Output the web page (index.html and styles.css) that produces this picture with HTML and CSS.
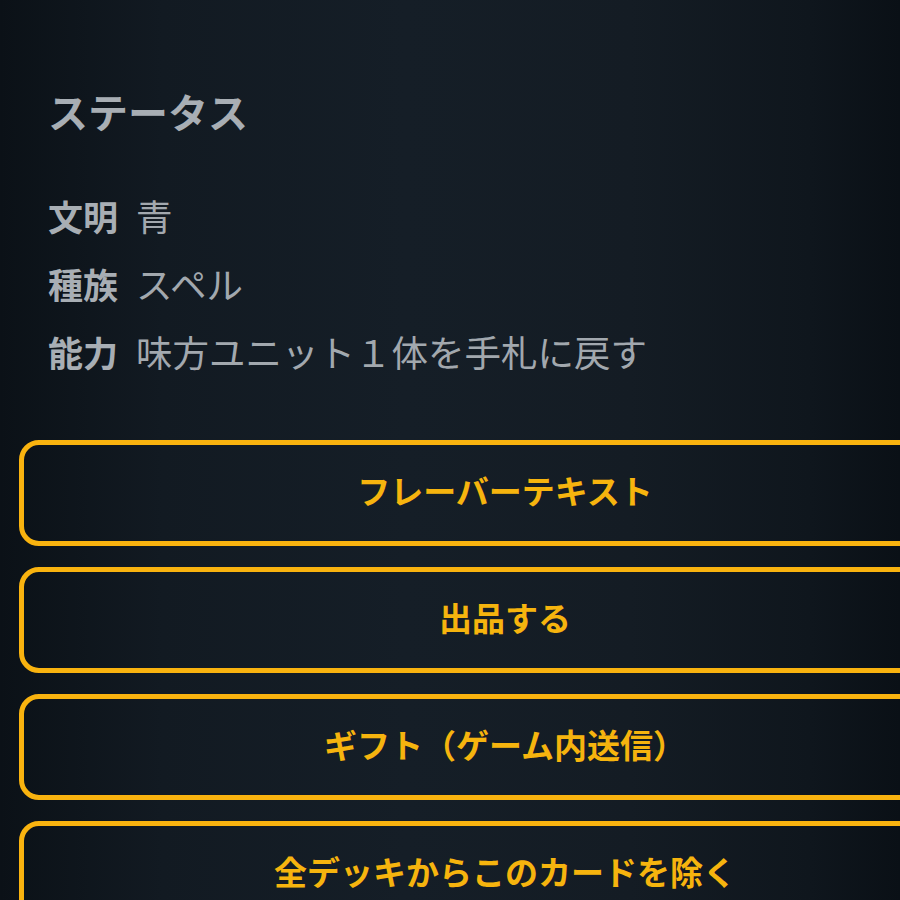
FILE: index.html
```html
<!DOCTYPE html>
<html lang="ja">
<head>
<meta charset="utf-8">
<title>ステータス</title>
<link rel="stylesheet" href="styles.css">
</head>
<body>
<main class="page">
  <h2 class="title">ステータス</h2>
  <dl class="stats">
    <div class="row"><dt>文明</dt><dd>青</dd></div>
    <div class="row"><dt>種族</dt><dd>スペル</dd></div>
    <div class="row"><dt>能力</dt><dd>味方ユニット１体を手札に戻す</dd></div>
  </dl>
  <div class="actions">
    <button class="btn">フレーバーテキスト</button>
    <button class="btn">出品する</button>
    <button class="btn">ギフト（ゲーム内送信）</button>
    <button class="btn">全デッキからこのカードを除く</button>
  </div>
</main>
</body>
</html>
```

FILE: styles.css
```css
html, body {
  margin: 0;
  padding: 0;
  height: 900px;
  overflow: hidden;
}
body {
  background: linear-gradient(90deg, #0b1117 0%, #121a22 18%, #151e27 45%, #141c24 70%, #0f161d 90%, #0a1016 100%);
  font-family: "Noto Sans CJK JP", "Noto Sans", sans-serif;
}
.page {
  padding: 87px 0 0 19px;
  width: 972px;
}
.title {
  margin: 0 0 0 29px;
  font-size: 40px;
  line-height: 48px;
  font-weight: 700;
  color: #a8aeb4;
}
.stats {
  margin: 47px 0 0 29px;
}
.row {
  display: flex;
  align-items: baseline;
  gap: 18px;
  line-height: 68px;
}
.row dt {
  font-size: 35px;
  font-weight: 700;
  color: #a8aeb4;
}
.row dd {
  margin: 0;
  font-size: 36.5px;
  font-weight: 400;
  color: #a2a8ae;
}
.actions {
  margin-top: 54px;
  display: flex;
  flex-direction: column;
  gap: 21px;
}
.btn {
  box-sizing: border-box;
  width: 972px;
  height: 106px;
  border: 5.5px solid #f9b30f;
  border-radius: 20px;
  background: transparent;
  color: #f6b40e;
  font-family: inherit;
  font-size: 33px;
  font-weight: 700;
  padding: 0 0 6px;
}
```
